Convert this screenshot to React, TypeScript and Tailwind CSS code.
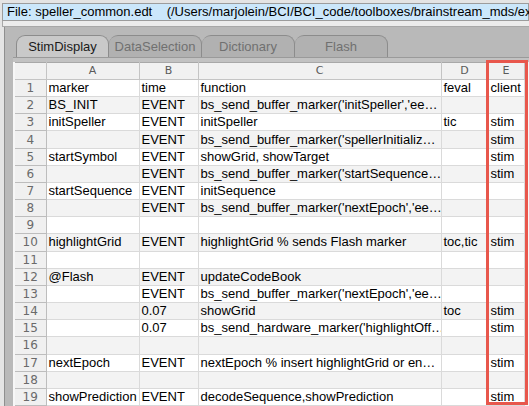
import React from 'react';

const rows: string[][] = [
  ['marker', 'time', 'function', 'feval', 'client'],
  ['BS_INIT', 'EVENT', "bs_send_buffer_marker('initSpeller','ee…", '', ''],
  ['initSpeller', 'EVENT', 'initSpeller', 'tic', 'stim'],
  ['', 'EVENT', "bs_send_buffer_marker('spellerInitializ…", '', 'stim'],
  ['startSymbol', 'EVENT', 'showGrid, showTarget', '', 'stim'],
  ['', 'EVENT', "bs_send_buffer_marker('startSequence…", '', 'stim'],
  ['startSequence', 'EVENT', 'initSequence', '', ''],
  ['', 'EVENT', "bs_send_buffer_marker('nextEpoch','ee…", '', ''],
  ['', '', '', '', ''],
  ['highlightGrid', 'EVENT', 'highlightGrid % sends Flash marker', 'toc,tic', 'stim'],
  ['', '', '', '', ''],
  ['@Flash', 'EVENT', 'updateCodeBook', '', ''],
  ['', 'EVENT', "bs_send_buffer_marker('nextEpoch','ee…", '', ''],
  ['', '0.07', 'showGrid', 'toc', 'stim'],
  ['', '0.07', "bs_send_hardware_marker('highlightOff…", '', 'stim'],
  ['', '', '', '', ''],
  ['nextEpoch', 'EVENT', 'nextEpoch % insert highlightGrid or en…', '', 'stim'],
  ['', '', '', '', ''],
  ['showPrediction', 'EVENT', 'decodeSequence,showPrediction', '', 'stim'],
];

const cols = [
  { key: 'A', w: 'w-[93px]' },
  { key: 'B', w: 'w-[59px]' },
  { key: 'C', w: 'w-[243px]' },
  { key: 'D', w: 'w-[47px]' },
  { key: 'E', w: 'w-[36px]' },
];

const tabs = ['StimDisplay', 'DataSelection', 'Dictionary', 'Flash'];

export default function App() {
  return (
    <div
      className="relative flex h-[406px] w-[529px] flex-col overflow-hidden bg-[#e4e4e4] text-black"
      style={{ fontFamily: '"Liberation Sans", Arial, sans-serif' }}
    >
      {/* file path bar */}
      <div className="ml-[2px] mt-[3px] h-[18px] whitespace-pre border border-[#9c9c9c] bg-[#cbe7fb] pl-[4px] text-[13px] leading-[16px]">
        {'File: speller_common.edt    (/Users/marjolein/BCI/BCI_code/toolboxes/brainstream_mds/ex'}
      </div>
      <div className="ml-[2px] h-[6px] border-b border-l border-[#a8a8a8] bg-[#ececec]" />

      {/* tab panel */}
      <div className="ml-[4px] flex flex-1 flex-col border-l border-[#8f8f8f] bg-[#b9b9b9] pl-[8px] pt-[8px]">
        <div className="flex h-[22px] items-stretch pl-[3px]">
          {tabs.map((t, i) => (
            <div
              key={t}
              className={
                i === 0
                  ? 'flex w-[93px] items-center justify-center rounded-t-[9px] border-l border-r border-t border-[#8c8c8c] bg-[#c9c9c9] text-[13px] text-[#1a1a1a]'
                  : 'flex w-[93px] items-center justify-center rounded-t-[9px] border-r border-t border-[#8c8c8c] bg-[#b1b1b1] text-[13px] text-[#707070]'
              }
            >
              {t}
            </div>
          ))}
        </div>
        <div className="h-[5px] border-t border-[#9a9a9a] bg-[#c2c2c2]" />

        {/* sheet */}
        <div className="flex flex-1 bg-[#f7f7f7] pl-[2px]">
          <table className="table-fixed border-collapse border-t border-[#a8a8a8] bg-white">
            <thead>
              <tr className="h-[17px] bg-[#f1f1f1]">
                <th
                  className="w-[31px] border-b border-r border-[#c4c4c4] p-0"
                  style={{ fontFamily: '"DejaVu Sans", sans-serif' }}
                />
                {cols.map((c) => (
                  <th
                    key={c.key}
                    className={`${c.w} border-b border-r border-[#c4c4c4] p-0 text-center text-[11px] font-normal leading-[16px] text-[#5a5a5a]`}
                    style={{ fontFamily: '"DejaVu Sans", sans-serif' }}
                  >
                    {c.key}
                  </th>
                ))}
              </tr>
            </thead>
            <tbody>
              {rows.map((r, i) => (
                <tr key={i} className={i % 2 === 1 ? 'h-[17px] bg-[#f3f3f3]' : 'h-[17px] bg-white'}>
                  <td
                    className="border-b border-r border-[#bdbdbd] bg-[#f0f0f0] p-0 text-center text-[12px] leading-[16px] text-[#6a6a6a]"
                    style={{ fontFamily: '"DejaVu Sans", sans-serif' }}
                  >
                    {i + 1}
                  </td>
                  {r.map((v, j) => (
                    <td
                      key={j}
                      className="max-w-0 overflow-hidden whitespace-nowrap border-b border-r border-[#dadada] p-0 pl-[2px] text-[13px] leading-[16px]"
                    >
                      {v}
                    </td>
                  ))}
                </tr>
              ))}
            </tbody>
          </table>
        </div>
      </div>

      {/* highlight around column E */}
      <div className="pointer-events-none absolute left-[486px] top-[60px] h-[345px] w-[42px] border-[3px] border-[#e8574c]" />
    </div>
  );
}
